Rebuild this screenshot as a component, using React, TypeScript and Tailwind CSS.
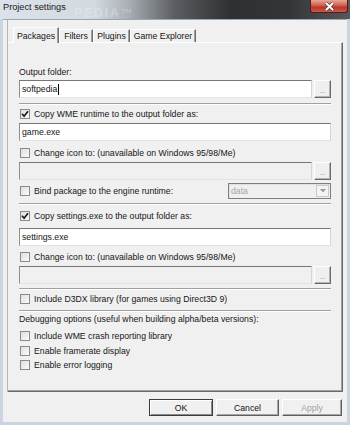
import React from 'react';

const Check = ({ checked }: { checked?: boolean }) => (
  <span className="ml-[1px] w-[10px] h-[10px] shrink-0 border border-[#8a8a8a] bg-gradient-to-br from-[#dedede] to-[#fbfbfb] flex items-center justify-center">
    {checked && (
      <svg width="8" height="8" viewBox="0 0 8 8">
        <path d="M1 3.8 L3.1 6.2 L7 1.2" fill="none" stroke="#1a1a1a" strokeWidth="1.7" />
      </svg>
    )}
  </span>
);

const CheckRow = ({ label, checked, className = '' }: { label: string; checked?: boolean; className?: string }) => (
  <div className={`flex items-center gap-[4px] h-[12px] ${className}`}>
    <Check checked={checked} />
    <span className="leading-[12px] whitespace-nowrap">{label}</span>
  </div>
);

const TextBox = ({ value, disabled, caret }: { value?: string; disabled?: boolean; caret?: boolean }) => (
  <div
    className={`h-[18px] flex-1 flex items-center pl-[2px] border border-t-[#767676] border-l-[#8f8f8f] border-r-[#d5d5d5] border-b-[#e3e3e3] ${
      disabled ? 'bg-[#f0f0f0]' : 'bg-white'
    }`}
  >
    <span className="leading-[12px]">{value}</span>
    {caret && <span className="w-px h-[11px] bg-black ml-px" />}
  </div>
);

const Browse = () => (
  <div className="w-[17px] h-[18px] ml-[2px] bg-[#efefef] border border-t-white border-l-white border-r-[#6a6a6a] border-b-[#6a6a6a] shadow-[inset_-1px_-1px_0_#b4b4b4] flex items-center justify-center text-[#9a9a9a] text-[8px] leading-none pt-[3px]">
    ...
  </div>
);

const Sep = ({ className = '' }: { className?: string }) => (
  <div className={`h-[2px] border-t border-[#a0a0a0] border-b border-b-white ${className}`} />
);

const Tab = ({ label, active, w }: { label: string; active?: boolean; w: string }) => (
  <div
    className={`${w} flex items-center justify-center border-t border-l border-t-white border-l-white border-r border-r-[#6d6d6d] bg-[#f0f0f0] ${
      active ? 'h-[16px] -mb-px relative z-10 shadow-[inset_-1px_0_0_#a0a0a0]' : 'h-[13px] shadow-[inset_-1px_0_0_#a0a0a0]'
    }`}
  >
    <span className="leading-[12px] whitespace-nowrap">{label}</span>
  </div>
);

const Button = ({ label, w, isDefault, disabled }: { label: string; w: string; isDefault?: boolean; disabled?: boolean }) => (
  <div
    className={`${w} h-[17px] flex items-center justify-center bg-[#f0f0f0] border ${
      isDefault
        ? 'border-[#3c3c3c] shadow-[inset_1px_1px_0_#fff,inset_-1px_-1px_0_#8a8a8a]'
        : 'border-t-white border-l-white border-r-[#5e5e5e] border-b-[#5e5e5e] shadow-[inset_-1px_-1px_0_#a5a5a5]'
    } ${disabled ? 'text-[#a3a3a3]' : 'text-[#111]'}`}
  >
    <span className="leading-[12px]">{label}</span>
  </div>
);

export default function App() {
  return (
    <div className="w-[350px] h-[425px] relative overflow-hidden bg-[#c9d5e0] font-['Liberation_Sans',Arial,sans-serif] text-[8.7px] text-[#161616]">
      {/* title bar */}
      <div className="h-[19px] relative bg-[linear-gradient(90deg,#dbe2e9_0%,#d2d9df_27%,#a7adb3_37%,#5a5d61_50%,#2f3032_66%,#333436_82%,#55585c_100%)]">
        <span className="absolute left-[74px] top-[7px] text-[12px] leading-[12px] tracking-[2px] text-white/25 font-bold">PEDIA™</span>
        <span className="absolute left-[3px] top-[2px] text-[9.2px] leading-[11px] text-[#1a1a1a]">Project settings</span>
        <div className="absolute right-[2px] top-0 w-[38px] h-[13px] rounded-b-[3px] border border-t-0 border-[#5a1a14] bg-[linear-gradient(180deg,#e9a596_0%,#d0604f_45%,#b8352a_60%,#cf5b48_100%)] flex items-center justify-center">
          <svg width="11" height="9" viewBox="0 0 11 9">
            <path d="M2 1 L9 8 M9 1 L2 8" stroke="#3a3a3a" strokeWidth="3.2" />
            <path d="M2 1 L9 8 M9 1 L2 8" stroke="#ffffff" strokeWidth="2" />
          </svg>
        </div>
      </div>

      {/* client area */}
      <div className="mx-[3px] h-[403px] bg-[#f0f0f0] border-t border-[#9aa6b2] flex flex-col">
        <div className="ml-[4px] w-[336px] border-l border-[#b4b4b4] pt-[7px]">
          <div className="flex items-end pl-[5px] h-[15px]">
            <Tab label="Packages" active w="w-[46px]" />
            <Tab label="Filters" w="w-[34px]" />
            <Tab label="Plugins" w="w-[37px]" />
            <Tab label="Game Explorer" w="w-[66px]" />
          </div>
          <div className="h-[350px] bg-[#f0f0f0] border-t border-t-white border-r border-b border-r-[#696969] border-b-[#696969] shadow-[inset_-1px_-1px_0_#a0a0a0] pl-[11px] pr-[11px] pt-[23px] flex flex-col">
            <div className="leading-[12px]">Output folder:</div>
            <div className="flex mt-[2px]">
              <TextBox value="softpedia" caret />
              <Browse />
            </div>
            <Sep className="mt-[5px]" />
            <CheckRow className="mt-[3px]" checked label="Copy WME runtime to the output folder as:" />
            <div className="flex mt-[3px]">
              <TextBox value="game.exe" />
            </div>
            <CheckRow className="mt-[6px]" label="Change icon to: (unavailable on Windows 95/98/Me)" />
            <div className="flex mt-[3px]">
              <TextBox disabled />
              <Browse />
            </div>
            <div className="flex items-center mt-[3px] h-[16px]">
              <CheckRow label="Bind package to the engine runtime:" />
              <div className="ml-auto w-[103px] h-[16px] border border-[#7e7e7e] bg-[#f0f0f0] flex items-center shadow-[inset_1px_1px_0_#e0e0e0]">
                <span className="pl-[2px] flex-1 text-[#a6a6a6] leading-[12px]">data</span>
                <div className="w-[13px] h-[12px] mr-px border border-[#c8c8c8] bg-[#f4f4f4] flex items-center justify-center">
                  <svg width="6" height="4" viewBox="0 0 6 4">
                    <path d="M0 0 L6 0 L3 3.5 Z" fill="#9a9a9a" />
                  </svg>
                </div>
              </div>
            </div>
            <Sep className="mt-[4px]" />
            <CheckRow className="mt-[5px]" checked label="Copy settings.exe to the output folder as:" />
            <div className="flex mt-[6px]">
              <TextBox value="settings.exe" />
            </div>
            <CheckRow className="mt-[5px]" label="Change icon to: (unavailable on Windows 95/98/Me)" />
            <div className="flex mt-[3px]">
              <TextBox disabled />
              <Browse />
            </div>
            <Sep className="mt-[4px]" />
            <CheckRow className="mt-[3px]" label="Include D3DX library (for games using Direct3D 9)" />
            <Sep className="mt-[5px]" />
            <div className="mt-[1px] leading-[12px]">Debugging options (useful when building alpha/beta versions):</div>
            <CheckRow className="mt-[5px]" label="Include WME crash reporting library" />
            <CheckRow className="mt-[3px]" label="Enable framerate display" />
            <CheckRow className="mt-[2px]" label="Enable error logging" />
          </div>
        </div>
        <div className="flex justify-end gap-[3px] mt-[7px] w-[340px] pr-[1px]">
          <Button label="OK" w="w-[64px]" isDefault />
          <Button label="Cancel" w="w-[63px]" />
          <Button label="Apply" w="w-[60px]" disabled />
        </div>
      </div>
    </div>
  );
}
